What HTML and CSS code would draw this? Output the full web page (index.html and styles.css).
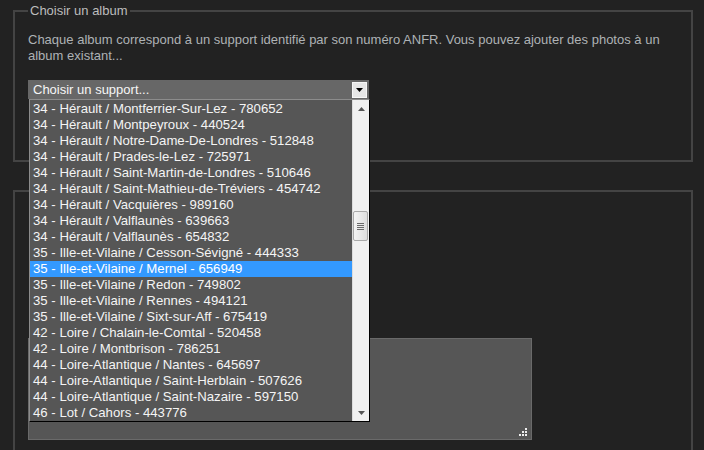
FILE: index.html
```html
<!DOCTYPE html>
<html lang="fr">
<head>
<meta charset="utf-8">
<title>Choisir un album</title>
<link rel="stylesheet" href="styles.css">
</head>
<body>
<div class="page">
  <fieldset class="box box-album">
    <legend class="box-title">Choisir un album</legend>
    <p class="intro">Chaque album correspond à un support identifié par son numéro ANFR. Vous pouvez ajouter des photos à un album existant...</p>
    <div class="select">
      <div class="select-head">
        <span class="select-label">Choisir un support...</span>
        <span class="select-btn"><svg width="7" height="4" viewBox="0 0 7 4"><path d="M0 0h7L3.5 4z" fill="#000"/></svg></span>
      </div>
      <div class="dropdown">
        <ul class="options">
          <li class="option">34 - Hérault / Montferrier-Sur-Lez - 780652</li>
          <li class="option">34 - Hérault / Montpeyroux - 440524</li>
          <li class="option">34 - Hérault / Notre-Dame-De-Londres - 512848</li>
          <li class="option">34 - Hérault / Prades-le-Lez - 725971</li>
          <li class="option">34 - Hérault / Saint-Martin-de-Londres - 510646</li>
          <li class="option">34 - Hérault / Saint-Mathieu-de-Tréviers - 454742</li>
          <li class="option">34 - Hérault / Vacquières - 989160</li>
          <li class="option">34 - Hérault / Valflaunès - 639663</li>
          <li class="option">34 - Hérault / Valflaunès - 654832</li>
          <li class="option">35 - Ille-et-Vilaine / Cesson-Sévigné - 444333</li>
          <li class="option option-selected">35 - Ille-et-Vilaine / Mernel - 656949</li>
          <li class="option">35 - Ille-et-Vilaine / Redon - 749802</li>
          <li class="option">35 - Ille-et-Vilaine / Rennes - 494121</li>
          <li class="option">35 - Ille-et-Vilaine / Sixt-sur-Aff - 675419</li>
          <li class="option">42 - Loire / Chalain-le-Comtal - 520458</li>
          <li class="option">42 - Loire / Montbrison - 786251</li>
          <li class="option">44 - Loire-Atlantique / Nantes - 645697</li>
          <li class="option">44 - Loire-Atlantique / Saint-Herblain - 507626</li>
          <li class="option">44 - Loire-Atlantique / Saint-Nazaire - 597150</li>
          <li class="option">46 - Lot / Cahors - 443776</li>
        </ul>
        <div class="scrollbar">
          <span class="scroll-arrow"><svg width="7" height="4" viewBox="0 0 7 4"><path d="M3.5 0L7 4H0z" fill="#555"/></svg></span>
          <div class="scroll-track">
            <div class="scroll-thumb"><span class="grip"></span><span class="grip"></span><span class="grip"></span><span class="grip"></span></div>
          </div>
          <span class="scroll-arrow"><svg width="7" height="4" viewBox="0 0 7 4"><path d="M0 0h7L3.5 4z" fill="#555"/></svg></span>
        </div>
      </div>
    </div>
  </fieldset>
  <fieldset class="box box-photo">
    <div class="textarea-wrap">
      <textarea class="textarea"></textarea>
      <svg class="resize-grip" width="9" height="9" viewBox="0 0 9 9">
        <rect x="6" y="0" width="2" height="2" fill="#eee"/>
        <rect x="3" y="3" width="2" height="2" fill="#eee"/>
        <rect x="6" y="3" width="2" height="2" fill="#eee"/>
        <rect x="0" y="6" width="2" height="2" fill="#eee"/>
        <rect x="3" y="6" width="2" height="2" fill="#eee"/>
        <rect x="6" y="6" width="2" height="2" fill="#eee"/>
      </svg>
    </div>
  </fieldset>
</div>
</body>
</html>
```

FILE: styles.css
```css
html, body {
  margin: 0;
  padding: 0;
  background: #222222;
  overflow: hidden;
  height: 450px;
}

.page {
  padding: 3px 11px 0 13px;
  font-family: "Liberation Sans", Arial, sans-serif;
}

.box {
  margin: 0;
  border: 2px solid #444444;
  padding: 13px 13px 0 13px;
  min-width: 0;
}

.box-title {
  padding: 0 2px;
  font-size: 13px;
  line-height: 16px;
  color: #bdbdbd;
}

.box-album {
  padding-bottom: 61px;
}

.intro {
  margin: 0;
  font-size: 13px;
  line-height: 16px;
  color: #aeb2b5;
}

.select {
  position: relative;
  margin-top: 16px;
  width: 341px;
}

.select-head {
  display: flex;
  align-items: center;
  justify-content: space-between;
  height: 19px;
  background: #676767;
  padding: 0 2px 0 5px;
  box-sizing: border-box;
}

.select-label {
  font-size: 13px;
  color: #f6f6f6;
}

.select-btn {
  display: flex;
  align-items: center;
  justify-content: center;
  width: 15px;
  height: 16px;
  background: #e6e6e6;
  border: 1px solid #f6f6f6;
  box-sizing: border-box;
}

.dropdown {
  position: absolute;
  top: 19px;
  left: 1px;
  width: 341px;
  height: 323px;
  box-sizing: border-box;
  border-top: 1px solid #8c8c8c;
  border-left: 1px solid #8c8c8c;
  border-right: 1px solid #000;
  border-bottom: 1px solid #000;
  background: #565656;
  display: flex;
  z-index: 2;
}

.options {
  list-style: none;
  margin: 0;
  padding: 1px 0 0 0;
  flex: 1;
}

.option {
  height: 16px;
  line-height: 16px;
  padding-left: 3px;
  font-size: 13.2px;
  color: #f4f4f4;
  white-space: nowrap;
}

.option-selected {
  background: #3399ff;
  color: #fff;
}

.scrollbar {
  width: 17px;
  background: #f0f0f0;
  border-left: 1px solid #dcdcdc;
  box-sizing: border-box;
  display: flex;
  flex-direction: column;
  align-items: center;
}

.scroll-arrow {
  height: 17px;
  display: flex;
  align-items: center;
  justify-content: center;
  width: 100%;
}

.scroll-track {
  flex: 1;
  width: 100%;
  position: relative;
}

.scroll-thumb {
  position: absolute;
  top: 94px;
  left: 0;
  width: 15px;
  height: 30px;
  box-sizing: border-box;
  border: 1px solid #a8a8a8;
  border-radius: 2px;
  background: linear-gradient(to right, #f4f4f4, #dedede);
  display: flex;
  flex-direction: column;
  align-items: center;
  justify-content: center;
  gap: 1px;
}

.grip {
  display: block;
  width: 7px;
  height: 1px;
  background: #6a6a6a;
}

.box-photo {
  margin-top: 28px;
  padding-bottom: 20px;
}

.textarea-wrap {
  position: relative;
  width: 504px;
  height: 102px;
  margin-top: 133px;
}

.textarea {
  display: block;
  width: 504px;
  height: 102px;
  box-sizing: border-box;
  margin: 0;
  background: #565656;
  border: 1px solid #6a6a6a;
  resize: none;
  outline: none;
}

.resize-grip {
  position: absolute;
  right: 4px;
  bottom: 3px;
}
```
